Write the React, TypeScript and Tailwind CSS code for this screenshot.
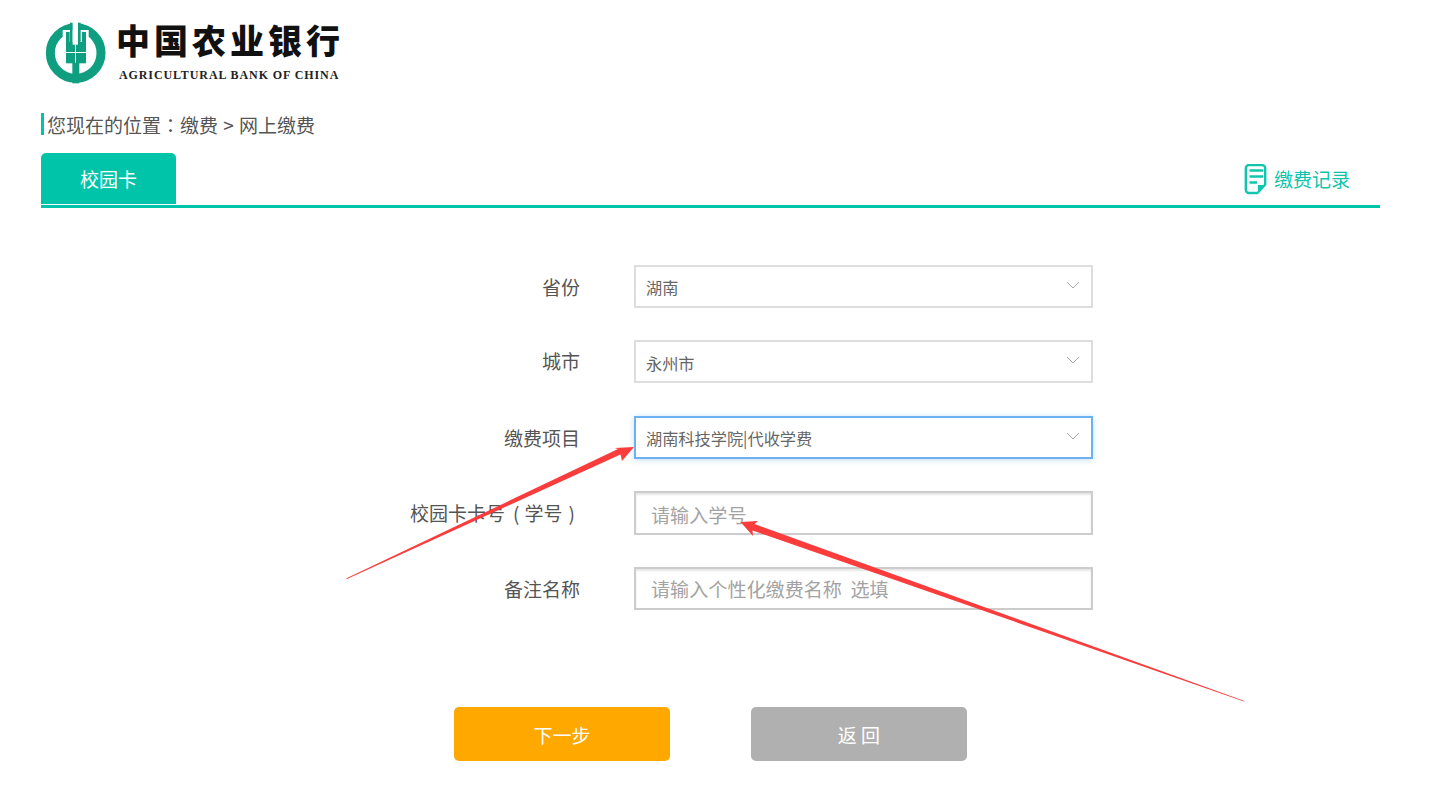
import React from "react";

const FONT = "font-['Noto_Sans_CJK_SC','Liberation_Sans',sans-serif]";

function Logo() {
  return (
    <div className="flex items-start h-[66px] ml-[1px]">
      <svg width="68" height="66" viewBox="0 0 204 198" className="shrink-0">
        <circle cx="101" cy="99" r="76" fill="none" stroke="#0f9f80" strokeWidth="27" />
        <rect x="62" y="30" width="78" height="40" fill="#fff" />
        <rect x="62" y="68" width="78" height="6" fill="#fff" />
        <rect x="72" y="36" width="11" height="34" fill="#0f9f80" />
        <rect x="120" y="36" width="12" height="34" fill="#0f9f80" />
        <rect x="84" y="8" width="8" height="64" fill="#0f9f80" />
        <rect x="108" y="8" width="8" height="64" fill="#0f9f80" />
        <rect x="72" y="66" width="60" height="64" fill="#0f9f80" />
        <rect x="92" y="8" width="16" height="66" fill="#fff" />
        <rect x="91" y="128" width="21" height="62" fill="#0f9f80" />
        <rect x="99" y="74" width="3" height="54" fill="#fff" />
        <rect x="72" y="96" width="60" height="3" fill="#fff" />
      </svg>
      <div className="flex flex-col ml-[8px]">
        <span className="-ml-[2px] mt-[2px] font-['Noto_Sans_CJK_SC',sans-serif] font-black text-[34px] leading-[36px] tracking-[4px] text-[#111] whitespace-nowrap">
          中国农业银行
        </span>
        <span className="ml-[1px] font-['Liberation_Serif',serif] font-bold text-[12px] leading-[13px] mt-[11px] tracking-[0.9px] text-[#222] whitespace-nowrap">
          AGRICULTURAL BANK OF CHINA
        </span>
      </div>
    </div>
  );
}

function Chevron() {
  return (
    <svg width="14" height="8" viewBox="0 0 14 8" fill="none" className="shrink-0">
      <path d="M1 1l6 6 6-6" stroke="#a3aab2" strokeWidth="1" />
    </svg>
  );
}

function RecordIcon() {
  return (
    <svg width="23" height="31" viewBox="0 0 23 31" fill="none" className="shrink-0">
      <path
        d="M13.5 29H5a3.2 3.2 0 0 1-3.2-3.2V4.2A3.2 3.2 0 0 1 5 1h13a3.2 3.2 0 0 1 3.2 3.2V20.5L13.5 29z"
        stroke="#12c6ad"
        strokeWidth="2.4"
        strokeLinejoin="round"
      />
      <path d="M5.5 6.5h13.5M5.5 12.5h13.5M5.5 18.5h7.5" stroke="#12c6ad" strokeWidth="2.4" />
      <path d="M14 28.5v-7.5h7z" fill="#12c6ad" />
    </svg>
  );
}

function Row({
  label,
  h,
  labelClass,
  children,
}: {
  label: React.ReactNode;
  h: string;
  labelClass: string;
  children: React.ReactNode;
}) {
  return (
    <div className={`flex items-start ${h}`}>
      <label
        className={`w-[539px] h-[43px] flex items-center justify-end text-[19px] text-[#555] whitespace-nowrap ${labelClass}`}
      >
        {label}
      </label>
      <div className="ml-[54px]">{children}</div>
    </div>
  );
}

function SelectBox({
  value,
  focused,
  textClass,
}: {
  value: string;
  focused?: boolean;
  textClass: string;
}) {
  return (
    <div
      className={
        focused
          ? "w-[459px] h-[43px] flex items-center justify-between pl-[10px] pr-[11px] border-2 border-[#6cb2f2] bg-white shadow-[0_1px_6px_rgba(90,160,230,0.35)]"
          : "w-[459px] h-[43px] flex items-center justify-between pl-[10px] pr-[11px] border-2 border-[#dddddd] bg-white"
      }
    >
      <span className={`text-[16.2px] text-[#666] leading-none ${textClass}`}>{value}</span>
      <span className="-mt-[3px] flex">
        <Chevron />
      </span>
    </div>
  );
}

function TextBox({ placeholder, tall }: { placeholder: string; tall?: boolean }) {
  return (
    <input
      readOnly
      placeholder={placeholder}
      className={
        tall
          ? "w-[459px] h-[44px] pl-[15px] pt-[3px] border-2 border-[#cccccc] bg-white outline-none text-[19.1px] shadow-[inset_0_2px_2px_rgba(0,0,0,0.1)] placeholder:text-[#a3a3a3] font-['Noto_Sans_CJK_SC','Liberation_Sans',sans-serif]"
          : "w-[459px] h-[43px] pl-[15px] pt-[1px] border-2 border-[#cccccc] bg-white outline-none text-[19.1px] shadow-[inset_0_2px_2px_rgba(0,0,0,0.1)] placeholder:text-[#a3a3a3] font-['Noto_Sans_CJK_SC','Liberation_Sans',sans-serif]"
      }
    />
  );
}

function Arrows() {
  return (
    <svg
      width="1434"
      height="799"
      viewBox="0 0 1434 799"
      className="absolute left-0 top-0 pointer-events-none"
    >
      <polygon points="346,578.5 618,449 614.5,448 634,447 622,461 620.5,454.5 347,579" fill="#fb3c3c" />
      <polygon points="1244.5,701 754.5,524 758,521 740.5,522 753,536 752.5,530.5 1244,701.5" fill="#fb3c3c" />
    </svg>
  );
}

const TC = "font-['Noto_Sans_CJK_TC',sans-serif]";

export default function App() {
  return (
    <div className={`relative w-[1434px] h-[799px] overflow-hidden bg-white ${FONT}`}>
      <div className="ml-[41px] w-[1339px] pt-[20px]">
        <Logo />

        <div className="mt-[27px] h-[22px] flex items-center border-l-[3px] border-[#00c4aa] pl-[3px] text-[19px] text-[#555] whitespace-pre">
          <span className="pt-[2px]">
            您现在的位置<span className={TC}>：</span>缴费 <span className="mx-[1px]">&gt;</span> 网上缴费
          </span>
        </div>

        <div className="mt-[18px] flex items-end justify-between border-b-[3px] border-[#00c4aa] h-[55px]">
          <div className="w-[135px] h-[51px] mb-[1px] pt-[2px] rounded-t-[5px] bg-[#00c4aa] text-white text-[19px] flex items-center justify-center">
            校园卡
          </div>
          <div className="flex items-center gap-[7px] mr-[30px] mb-[10px] text-[19px] text-[#0fc4ab]">
            <RecordIcon />
            <span>缴费记录</span>
          </div>
        </div>

        <div className="mt-[57px] flex flex-col gap-[32px]">
          <Row label="省份" h="h-[43px]" labelClass="pt-[2px]">
            <SelectBox value="湖南" textClass="pt-[1px]" />
          </Row>
          <Row label="城市" h="h-[44px]" labelClass="pt-0">
            <SelectBox value="永州市" textClass="pt-[3px]" />
          </Row>
          <Row label="缴费项目" h="h-[43px]" labelClass="pt-[2px]">
            <SelectBox value="湖南科技学院|代收学费" focused textClass="pt-[1px]" />
          </Row>
          <Row
            label={
              <span>
                校园卡卡号<span className="ml-[8px] mr-[5px]">(</span>学号<span className="ml-[6px] mr-[5px]">)</span>
              </span>
            }
            h="h-[44px]"
            labelClass="pt-[2px]"
          >
            <TextBox placeholder="请输入学号" tall />
          </Row>
          <Row label="备注名称" h="h-[43px]" labelClass="pt-[2px]">
            <TextBox placeholder="请输入个性化缴费名称  选填" />
          </Row>
        </div>

        <div className="mt-[97px] ml-[413px] flex gap-[81px]">
          <button className="w-[216px] h-[54px] pt-[2px] rounded-[5px] bg-[#ffa800] text-white text-[19px]">
            下一步
          </button>
          <button className="w-[216px] h-[54px] pt-[2px] rounded-[5px] bg-[#b0b0b0] text-white text-[19px]">
            返 回
          </button>
        </div>
      </div>
      <Arrows />
    </div>
  );
}
